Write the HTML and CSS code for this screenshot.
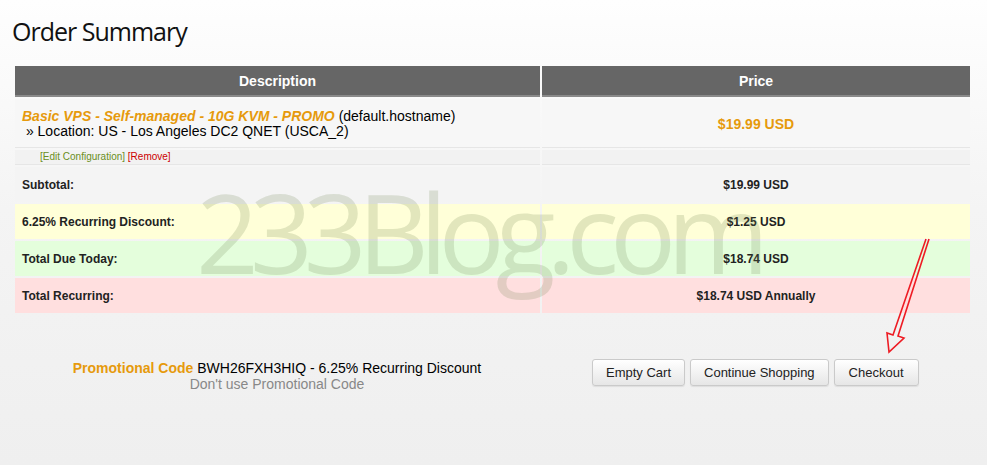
FILE: index.html
```html
<!DOCTYPE html>
<html lang="en">
<head>
    <meta charset="UTF-8">
    <title>Order Summary</title>
    <link rel="stylesheet" href="styles.css">
</head>
<body>
    <h1 class="page-title">Order Summary</h1>
    <div class="cart-wrap">
        <table class="cart">
            <thead>
                <tr>
                    <th class="col-desc">Description</th>
                    <th class="col-price">Price</th>
                </tr>
            </thead>
            <tbody>
                <tr class="row-product">
                    <td class="desc">
                        <span class="product-name">Basic VPS - Self-managed - 10G KVM - PROMO</span> (default.hostname)<br>
                        &nbsp;&raquo; Location: US - Los Angeles DC2 QNET (USCA_2)
                    </td>
                    <td class="price product-price">$19.99 USD</td>
                </tr>
                <tr class="row-links">
                    <td><a class="edit-link">[Edit Configuration]</a> <a class="remove-link">[Remove]</a></td>
                    <td></td>
                </tr>
                <tr class="row-total subtotal">
                    <td>Subtotal:</td>
                    <td class="price">$19.99 USD</td>
                </tr>
                <tr class="row-total discount">
                    <td>6.25% Recurring Discount:</td>
                    <td class="price">$1.25 USD</td>
                </tr>
                <tr class="row-total due">
                    <td>Total Due Today:</td>
                    <td class="price">$18.74 USD</td>
                </tr>
                <tr class="row-total recurring">
                    <td>Total Recurring:</td>
                    <td class="price">$18.74 USD Annually</td>
                </tr>
            </tbody>
        </table>
        <div class="watermark">233Blog.com</div>
    </div>

    <div class="cart-footer">
        <div class="promo">
            <div><span class="promo-label">Promotional Code</span> BWH26FXH3HIQ - 6.25% Recurring Discount</div>
            <div class="promo-remove">Don't use Promotional Code</div>
        </div>
        <div class="actions">
            <button class="btn">Empty Cart</button>
            <button class="btn">Continue Shopping</button>
            <button class="btn btn-checkout">Checkout</button>
        </div>
    </div>

    <svg class="arrow" width="60" height="130" viewBox="0 0 60 130">
        <path d="M51 1 L20 98 L26 100 L11 114 L9 95 L15 97 L48 1" fill="none" stroke="#ee1c24" stroke-width="1.6" stroke-linejoin="miter"/>
    </svg>
</body>
</html>
```

FILE: styles.css
```css
body {
    margin: 0;
    min-height: 465px;
    font-family: "Liberation Sans", Arial, sans-serif;
    font-size: 14px;
    color: #000;
    background: linear-gradient(to bottom, #fefefe 0%, #f4f4f4 45%, #efefef 100%);
    position: relative;
    overflow: hidden;
}

.page-title {
    margin: 0;
    padding: 14px 0 0 12px;
    height: 51px;
    box-sizing: border-box;
    font-family: "Open Sans", "Noto Sans", sans-serif;
    font-weight: 400;
    font-size: 25px;
    line-height: 34px;
    letter-spacing: -1px;
    color: #111;
}

.cart-wrap {
    position: relative;
    margin: 0 15px 0 13px;
}

.cart {
    width: 100%;
    border-collapse: separate;
    border-spacing: 2px;
    margin-top: 13px;
}

.cart th {
    background-color: #666;
    color: #fff;
    font-weight: bold;
    font-size: 14px;
    height: 31px;
    padding: 0;
    text-align: center;
    border-bottom: 2px solid #8a8a8a;
    box-sizing: border-box;
}

.col-desc {
    width: 525px;
}

.cart td {
    padding: 0 7px;
    vertical-align: middle;
}

.row-product td {
    background-color: #f7f7f7;
    height: 46px;
    line-height: 15px;
    padding-top: 2px;
    border-bottom: 1px solid #e6e6e6;
}

.product-name {
    color: #e69a0c;
    font-weight: bold;
    font-style: italic;
}

.price {
    text-align: center;
}

.product-price {
    color: #e69a0c;
    font-weight: bold;
}

.row-links td {
    background-color: #f2f2f2;
    height: 14px;
    font-size: 10px;
    line-height: 12px;
    padding-left: 25px;
    border-bottom: 1px solid #e6e6e6;
}

.edit-link {
    color: #6a8e22;
}

.remove-link {
    color: #cc0000;
}

.row-total td {
    height: 35px;
    font-size: 12px;
    font-weight: bold;
    color: #222;
}

.subtotal td {
    background-color: #f4f4f4;
}

.discount td {
    background-color: #ffffd8;
}

.due td {
    background-color: #e4fedc;
}

.recurring td {
    background-color: #ffdfdf;
}

.watermark {
    position: absolute;
    left: 183px;
    top: 112px;
    font-family: "Open Sans", "Noto Sans", sans-serif;
    font-weight: 400;
    font-size: 110px;
    line-height: 1;
    letter-spacing: -9px;
    color: rgba(110, 130, 80, 0.2);
    pointer-events: none;
}

.cart-footer {
    display: flex;
    align-items: flex-start;
    margin: 44px 0 0 13px;
}

.promo {
    flex: 0 0 528px;
    text-align: center;
    line-height: 16px;
    padding-top: 1px;
}

.promo-label {
    color: #e69a0c;
    font-weight: bold;
}

.promo-remove {
    color: #888;
}

.actions {
    display: flex;
    gap: 5px;
    margin-left: 51px;
}

.btn {
    font-family: "Liberation Sans", Arial, sans-serif;
    font-size: 13px;
    color: #222;
    height: 27px;
    padding: 0 13px;
    background: linear-gradient(to bottom, #ffffff, #e6e6e6);
    border: 1px solid #cacaca;
    border-radius: 3px;
    box-shadow: 0 1px 1px rgba(0, 0, 0, 0.08);
}

.btn-checkout {
    padding: 0 14px;
}

.arrow {
    position: absolute;
    left: 878px;
    top: 238px;
}
```
